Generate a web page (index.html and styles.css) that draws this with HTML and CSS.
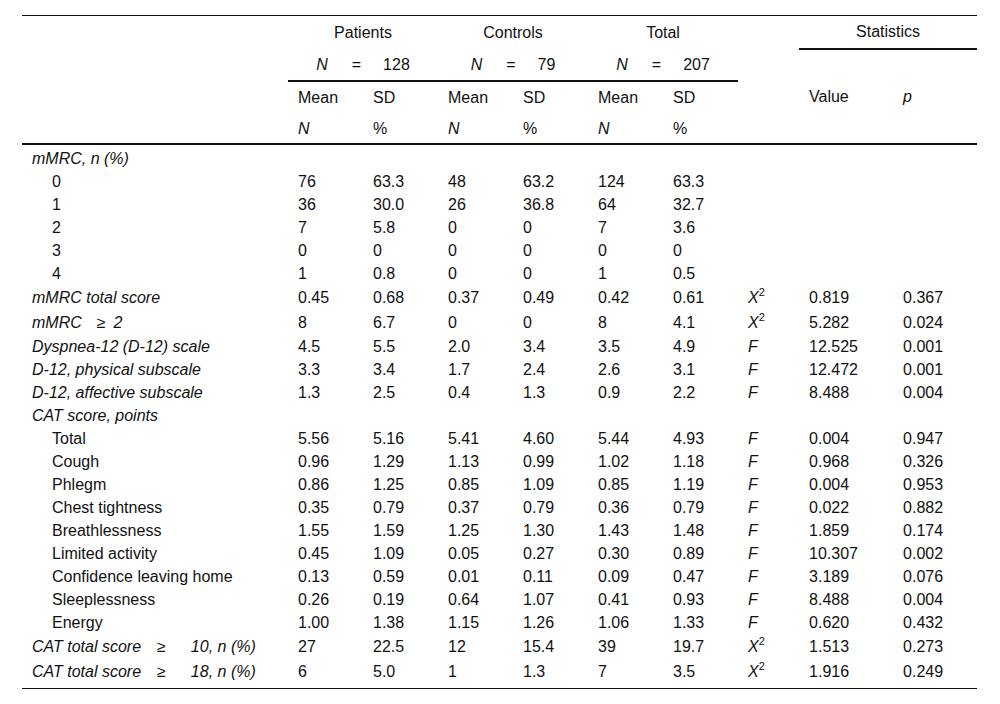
FILE: index.html
```html
<!DOCTYPE html>
<html>
<head>
<meta charset="utf-8">
<link rel="stylesheet" href="styles.css">
</head>
<body>
<table class="tbl">
  <colgroup>
    <col class="c-label">
    <col class="c-num"><col class="c-num"><col class="c-num"><col class="c-num"><col class="c-num"><col class="c-num">
    <col class="c-type"><col class="c-val"><col class="c-p">
  </colgroup>
  <thead>
    <tr class="h r1">
      <th></th>
      <th colspan="2" class="ctr">Patients</th>
      <th colspan="2" class="ctr">Controls</th>
      <th colspan="2" class="ctr">Total</th>
      <th></th>
      <th colspan="2" class="ctr rule">Statistics</th>
    </tr>
    <tr class="h r2">
      <th></th>
      <th colspan="2" class="ctr rule"><i>N</i><span class="eq">=</span>128</th>
      <th colspan="2" class="ctr rule"><i>N</i><span class="eq">=</span>79</th>
      <th colspan="2" class="ctr rule"><i>N</i><span class="eq">=</span>207</th>
      <th></th>
      <th rowspan="3" class="mid base">Value</th>
      <th rowspan="3" class="mid base"><i>p</i></th>
    </tr>
    <tr class="h r3">
      <th></th>
      <th>Mean</th><th>SD</th><th>Mean</th><th>SD</th><th>Mean</th><th>SD</th>
      <th></th>
    </tr>
    <tr class="h r4 last">
      <th></th>
      <th><i>N</i></th><th>%</th><th><i>N</i></th><th>%</th><th><i>N</i></th><th>%</th>
      <th></th>
    </tr>
  </thead>
  <tbody>
    <tr class="first"><td class="lbl"><i>mMRC, n (%)</i></td><td></td><td></td><td></td><td></td><td></td><td></td><td></td><td></td><td></td></tr>
    <tr><td class="sub">0</td><td>76</td><td>63.3</td><td>48</td><td>63.2</td><td>124</td><td>63.3</td><td></td><td></td><td></td></tr>
    <tr><td class="sub">1</td><td>36</td><td>30.0</td><td>26</td><td>36.8</td><td>64</td><td>32.7</td><td></td><td></td><td></td></tr>
    <tr><td class="sub">2</td><td>7</td><td>5.8</td><td>0</td><td>0</td><td>7</td><td>3.6</td><td></td><td></td><td></td></tr>
    <tr><td class="sub">3</td><td>0</td><td>0</td><td>0</td><td>0</td><td>0</td><td>0</td><td></td><td></td><td></td></tr>
    <tr><td class="sub">4</td><td>1</td><td>0.8</td><td>0</td><td>0</td><td>1</td><td>0.5</td><td></td><td></td><td></td></tr>
    <tr class="sq"><td class="lbl"><i>mMRC total score</i></td><td>0.45</td><td>0.68</td><td>0.37</td><td>0.49</td><td>0.42</td><td>0.61</td><td><i>X</i><sup>2</sup></td><td>0.819</td><td>0.367</td></tr>
    <tr class="sq"><td class="lbl"><i>mMRC<span class="ge">≥</span>2</i></td><td>8</td><td>6.7</td><td>0</td><td>0</td><td>8</td><td>4.1</td><td><i>X</i><sup>2</sup></td><td>5.282</td><td>0.024</td></tr>
    <tr><td class="lbl"><i>Dyspnea-12 (D-12) scale</i></td><td>4.5</td><td>5.5</td><td>2.0</td><td>3.4</td><td>3.5</td><td>4.9</td><td><i>F</i></td><td>12.525</td><td>0.001</td></tr>
    <tr><td class="lbl"><i>D-12, physical subscale</i></td><td>3.3</td><td>3.4</td><td>1.7</td><td>2.4</td><td>2.6</td><td>3.1</td><td><i>F</i></td><td>12.472</td><td>0.001</td></tr>
    <tr><td class="lbl"><i>D-12, affective subscale</i></td><td>1.3</td><td>2.5</td><td>0.4</td><td>1.3</td><td>0.9</td><td>2.2</td><td><i>F</i></td><td>8.488</td><td>0.004</td></tr>
    <tr><td class="lbl"><i>CAT score, points</i></td><td></td><td></td><td></td><td></td><td></td><td></td><td></td><td></td><td></td></tr>
    <tr><td class="sub">Total</td><td>5.56</td><td>5.16</td><td>5.41</td><td>4.60</td><td>5.44</td><td>4.93</td><td><i>F</i></td><td>0.004</td><td>0.947</td></tr>
    <tr><td class="sub">Cough</td><td>0.96</td><td>1.29</td><td>1.13</td><td>0.99</td><td>1.02</td><td>1.18</td><td><i>F</i></td><td>0.968</td><td>0.326</td></tr>
    <tr><td class="sub">Phlegm</td><td>0.86</td><td>1.25</td><td>0.85</td><td>1.09</td><td>0.85</td><td>1.19</td><td><i>F</i></td><td>0.004</td><td>0.953</td></tr>
    <tr><td class="sub">Chest tightness</td><td>0.35</td><td>0.79</td><td>0.37</td><td>0.79</td><td>0.36</td><td>0.79</td><td><i>F</i></td><td>0.022</td><td>0.882</td></tr>
    <tr><td class="sub">Breathlessness</td><td>1.55</td><td>1.59</td><td>1.25</td><td>1.30</td><td>1.43</td><td>1.48</td><td><i>F</i></td><td>1.859</td><td>0.174</td></tr>
    <tr><td class="sub">Limited activity</td><td>0.45</td><td>1.09</td><td>0.05</td><td>0.27</td><td>0.30</td><td>0.89</td><td><i>F</i></td><td>10.307</td><td>0.002</td></tr>
    <tr><td class="sub">Confidence leaving home</td><td>0.13</td><td>0.59</td><td>0.01</td><td>0.11</td><td>0.09</td><td>0.47</td><td><i>F</i></td><td>3.189</td><td>0.076</td></tr>
    <tr><td class="sub">Sleeplessness</td><td>0.26</td><td>0.19</td><td>0.64</td><td>1.07</td><td>0.41</td><td>0.93</td><td><i>F</i></td><td>8.488</td><td>0.004</td></tr>
    <tr><td class="sub">Energy</td><td>1.00</td><td>1.38</td><td>1.15</td><td>1.26</td><td>1.06</td><td>1.33</td><td><i>F</i></td><td>0.620</td><td>0.432</td></tr>
    <tr class="sq"><td class="lbl"><i>CAT total score<span class="ge2">≥</span>10, n (%)</i></td><td>27</td><td>22.5</td><td>12</td><td>15.4</td><td>39</td><td>19.7</td><td><i>X</i><sup>2</sup></td><td>1.513</td><td>0.273</td></tr>
    <tr class="sq end"><td class="lbl"><i>CAT total score<span class="ge2">≥</span>18, n (%)</i></td><td>6</td><td>5.0</td><td>1</td><td>1.3</td><td>7</td><td>3.5</td><td><i>X</i><sup>2</sup></td><td>1.916</td><td>0.249</td></tr>
  </tbody>
</table>
</body>
</html>
```
FILE: styles.css
```css
html, body {
  margin: 0;
  padding: 0;
  background: #fff;
}
body {
  padding: 15px 0 0 22px;
  font-family: "Liberation Sans", Arial, sans-serif;
  font-size: 16px;
  color: #111;
}
.tbl {
  width: 955px;
  border-collapse: collapse;
  table-layout: fixed;
  border-top: 1px solid #111;
  border-bottom: 1px solid #111;
}
.c-label { width: 266px; }
.c-num { width: 75px; }
.c-type { width: 61px; }
.c-val { width: 94px; }
.c-p { width: 84px; }

.tbl th {
  font-weight: normal;
  text-align: left;
  padding: 7px 10px;
  line-height: 18px;
  vertical-align: middle;
}
.tbl tr.r2 th,
.tbl tr.r3 th { padding-bottom: 6px; }
.tbl tr.r4 th { padding-bottom: 5px; }
.tbl th.ctr { text-align: center; }
.tbl th.rule { border-bottom: 2px solid #111; }
.tbl tr.last th,
.tbl th.base { border-bottom: 2px solid #111; }

.tbl td {
  padding: 2px 10px 3px;
  line-height: 18px;
  vertical-align: middle;
  white-space: nowrap;
}
.tbl tr.first td { padding-top: 5px; }
.tbl tr.sq td { padding-top: 3px; padding-bottom: 4px; }
.tbl td.sub { padding-left: 30px; }
.tbl tr.end td { padding-bottom: 7px; }

.eq { margin: 0 22px 0 24px; }
.ge { margin: 0 8px 0 15px; font-style: normal; }
.ge2 { margin: 0 25px 0 16px; font-style: normal; }

sup {
  font-size: 11px;
  line-height: 0;
  vertical-align: 7px;
}
```
